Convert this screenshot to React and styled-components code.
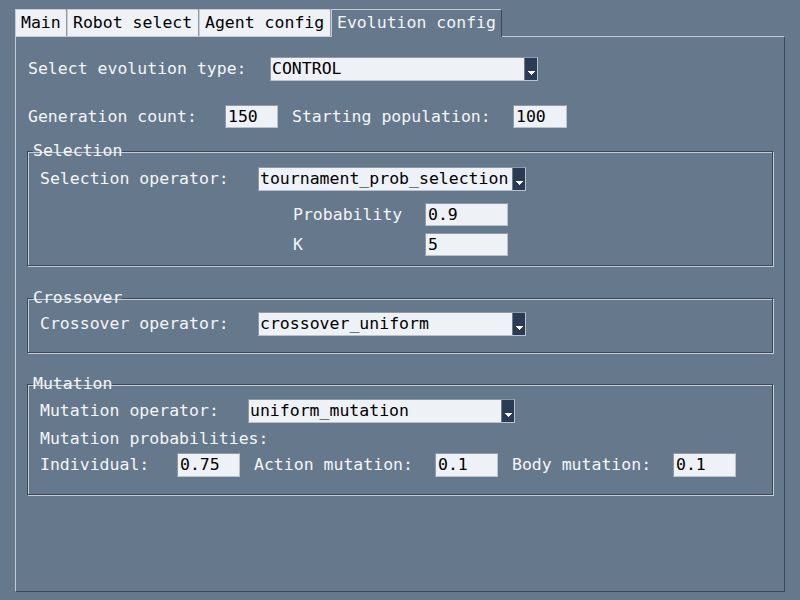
import React from "react";
import styled, { createGlobalStyle } from "styled-components";

const BG = "#66788c";
const LIGHT = "#c4ccd6";
const DARK = "#3b4858";
const FIELD = "#eef2f7";

const GlobalStyle = createGlobalStyle`
  html, body {
    margin: 0;
    padding: 0;
    background: ${BG};
  }
  body {
    font-family: "DejaVu Sans Mono", "Liberation Mono", monospace;
    font-size: 16.5px;
    color: #f4f6f9;
  }
`;

function App() {
  return (
    <Screen>
      <GlobalStyle />
      <TabBar>
        <Tab w={52}>Main</Tab>
        <Tab w={132}>Robot select</Tab>
        <Tab w={132}>Agent config</Tab>
        <Tab w={171} active>Evolution config</Tab>
      </TabBar>
      <Panel>
        <Row top={20}>
          <Label w={242}>Select evolution type:</Label>
          <Dropdown value="CONTROL" w={268} />
        </Row>
        <Row top={24}>
          <Label w={197}>Generation count:</Label>
          <Input w={53}>150</Input>
          <Label w={221} left={13}>Starting population:</Label>
          <Input w={54}>100</Input>
        </Row>

        <Group top={15} h={123}>
          <Legend>Selection</Legend>
          <Row top={8} indent={11}>
            <Label w={218}>Selection operator:</Label>
            <Dropdown value="tournament_prob_selection" w={268} />
          </Row>
          <Row top={12} indent={264}>
            <Label w={132}>Probability</Label>
            <Input w={83}>0.9</Input>
          </Row>
          <Row top={7} indent={264}>
            <Label w={132}>K</Label>
            <Input w={83}>5</Input>
          </Row>
        </Group>

        <Group top={24} h={63}>
          <Legend>Crossover</Legend>
          <Row top={6} indent={11}>
            <Label w={218}>Crossover operator:</Label>
            <Dropdown value="crossover_uniform" w={268} />
          </Row>
        </Group>

        <Group top={23} h={119}>
          <Legend>Mutation</Legend>
          <Row top={7} indent={11}>
            <Label w={208}>Mutation operator:</Label>
            <Dropdown value="uniform_mutation" w={267} />
          </Row>
          <Row top={4} indent={11}>
            <Label>Mutation probabilities:</Label>
          </Row>
          <Row top={3} indent={11}>
            <Label w={137}>Individual:</Label>
            <Input w={63} h={24}>0.75</Input>
            <Label w={181} left={13}>Action mutation:</Label>
            <Input w={63} h={24}>0.1</Input>
            <Label w={161} left={13}>Body mutation:</Label>
            <Input w={63} h={24}>0.1</Input>
          </Row>
        </Group>
      </Panel>
    </Screen>
  );
}

const Dropdown = ({ value, w }) => (
  <Select w={w}>
    <SelectText>{value}</SelectText>
    <ArrowButton>
      <svg width="7" height="4" viewBox="0 0 7 4">
        <path d="M0 0h7v1h-1v1h-1v1h-1v1h-1v-1h-1v-1h-1v-1h-1z" fill="#ffffff" />
      </svg>
    </ArrowButton>
  </Select>
);

const Screen = styled.div`
  width: 800px;
  height: 600px;
  padding: 9px 15px 0 15px;
  box-sizing: border-box;
  display: flex;
  flex-direction: column;
`;

const TabBar = styled.div`
  display: flex;
  height: 27px;
`;

const Tab = styled.div`
  box-sizing: border-box;
  width: ${(p) => p.w}px;
  height: 27px;
  padding: 2px 0 0 5px;
  line-height: 22px;
  white-space: nowrap;
  background: ${(p) => (p.active ? BG : FIELD)};
  color: ${(p) => (p.active ? "#f4f6f9" : "#000")};
  border-top: 1px solid ${LIGHT};
  border-left: 1px solid ${LIGHT};
  border-right: 1px solid ${(p) => (p.active ? DARK : "#8e9aa8")};
  border-top-right-radius: 2px;
  ${(p) => (p.active ? "height: 28px; margin-bottom: -1px; position: relative; z-index: 1;" : "")}
`;

const Panel = styled.div`
  box-sizing: border-box;
  width: 770px;
  height: 556px;
  padding: 0 11px;
  border-top: 1px solid ${LIGHT};
  border-left: 1px solid ${LIGHT};
  border-right: 1px solid ${DARK};
  border-bottom: 1px solid ${DARK};
  display: flex;
  flex-direction: column;
`;

const Row = styled.div`
  display: flex;
  align-items: center;
  margin-top: ${(p) => p.top || 0}px;
  padding-left: ${(p) => p.indent || 0}px;
  min-height: 23px;
`;

const Label = styled.span`
  flex: none;
  width: ${(p) => (p.w ? `${p.w}px` : "auto")};
  margin-left: ${(p) => p.left || 0}px;
  padding-left: 1px;
  white-space: nowrap;
  line-height: 20px;
`;

const Input = styled.div`
  flex: none;
  box-sizing: border-box;
  width: ${(p) => p.w}px;
  height: ${(p) => p.h || 23}px;
  padding: 0 2px;
  line-height: ${(p) => (p.h || 23) - 2}px;
  background: ${FIELD};
  color: #000;
  border-top: 1px solid #8e9aa8;
  border-left: 1px solid #8e9aa8;
  border-right: 1px solid #b8c2cc;
  border-bottom: 1px solid #b8c2cc;
`;

const Select = styled.div`
  flex: none;
  box-sizing: border-box;
  width: ${(p) => p.w}px;
  height: 24px;
  display: flex;
  background: ${FIELD};
  color: #000;
  border: 1px solid #8e9aa8;
  border-right-color: #b8c2cc;
  border-bottom-color: #b8c2cc;
`;

const SelectText = styled.span`
  flex: 1;
  padding-left: 1px;
  line-height: 22px;
  overflow: hidden;
  white-space: nowrap;
`;

const ArrowButton = styled.div`
  flex: none;
  width: 13px;
  background: #2b3a55;
  border-left: 1px solid #6f7c8c;
  display: flex;
  align-items: flex-end;
  justify-content: center;
  padding-bottom: 5px;
  box-sizing: border-box;
`;

const Group = styled.fieldset`
  box-sizing: border-box;
  margin: ${(p) => p.top || 0}px 0 0 0;
  padding: 0;
  height: ${(p) => p.h}px;
  min-width: 0;
  border: 1px solid ${DARK};
  box-shadow: inset 1px 1px 0 ${LIGHT}, 1px 1px 0 ${LIGHT};
`;

const Legend = styled.legend`
  padding: 0;
  margin-left: 5px;
  line-height: 16px;
`;

export default App;
